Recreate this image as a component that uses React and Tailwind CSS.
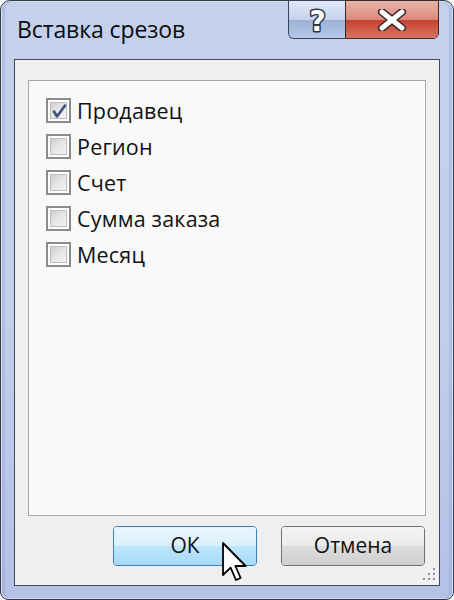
import React from "react";

const items = [
  { label: "Продавец", checked: true },
  { label: "Регион", checked: false },
  { label: "Счет", checked: false },
  { label: "Сумма заказа", checked: false },
  { label: "Месяц", checked: false },
];

function CheckBox({ checked }) {
  return (
    <div className="w-[25px] h-[25px] border-2 border-[#8a8c8e] bg-white p-[2px] shrink-0">
      <div className="relative w-full h-full bg-gradient-to-br from-[#cfcfcf] via-[#e6e6e6] to-[#f4f4f4] border border-[#bdbdbd]">
        {checked && (
          <svg className="absolute inset-0" viewBox="0 0 17 17" width="17" height="17">
            <path d="M3 8.5 L6 13.5 L14 2.5" fill="none" stroke="#3f4f80" strokeWidth="2.6" strokeLinejoin="round" strokeLinecap="round" />
          </svg>
        )}
      </div>
    </div>
  );
}

export default function App() {
  const font = { fontFamily: '"Open Sans", "Noto Sans", sans-serif' };
  return (
    <div className="relative w-[454px] h-[600px] bg-white overflow-hidden" style={font}>
      <div className="w-full h-full flex flex-col border border-[#343a46] rounded-t-[10px] rounded-b-[8px] bg-gradient-to-b from-[#c4d0ec] via-[#c4cfeb] to-[#b4c1e6] px-[13px] shadow-[inset_0_0_0_1px_rgba(255,255,255,0.55),inset_3px_0_0_1px_rgba(140,160,210,0.35),inset_-3px_0_0_1px_rgba(140,160,210,0.35)]">
        {/* title bar */}
        <div className="h-[58px] flex justify-between items-start shrink-0">
          <div className="pt-[13px] pl-[3px] text-[23px] leading-[30px] text-[#0c0c0c] tracking-[-0.1px]">
            Вставка срезов
          </div>
          <div className="flex h-[39px] mr-[1px] mt-[-1px]">
            <div className="w-[57px] h-full border border-[#3a4458] border-r-0 rounded-bl-[6px] overflow-hidden flex flex-col relative">
              <div className="h-1/2 bg-gradient-to-b from-[#e1e9f6] to-[#c4d3ec]"></div>
              <div className="h-1/2 bg-gradient-to-b from-[#9cb1d8] to-[#b6c8e6]"></div>
              <svg className="absolute inset-0" width="57" height="39" viewBox="0 0 57 39">
                <text x="28.5" y="30" textAnchor="middle" fontSize="28" fontWeight="bold" fontFamily="'DejaVu Sans', sans-serif" fill="#ffffff" stroke="#2c3445" strokeWidth="3" paintOrder="stroke" strokeLinejoin="round">?</text>
              </svg>
            </div>
            <div className="w-[94px] h-full border border-[#3a2a2a] rounded-br-[6px] overflow-hidden flex flex-col relative">
              <div className="h-1/2 bg-gradient-to-b from-[#e9b3a8] to-[#d98a7c]"></div>
              <div className="h-1/2 bg-gradient-to-b from-[#c4402f] to-[#d8735e]"></div>
              <div className="absolute inset-0 flex items-center justify-center">
                <svg width="30" height="22" viewBox="0 0 30 22">
                  <path d="M5 3 L25 19 M25 3 L5 19" stroke="#3a2626" strokeWidth="8" strokeLinecap="round" />
                  <path d="M5 3 L25 19 M25 3 L5 19" stroke="#ffffff" strokeWidth="5" strokeLinecap="round" />
                </svg>
              </div>
            </div>
          </div>
        </div>
        {/* client area */}
        <div className="relative h-[527px] border border-[#414857] bg-[#efefef] flex flex-col px-[13px] pt-[20px]">
          <div className="h-[436px] border border-[#a7a7a7] bg-[#f9f9f9] pl-[17px] pt-[17px] flex flex-col gap-[11px]">
            {items.map((it) => (
              <div key={it.label} className="flex items-center gap-[6px] h-[25px]">
                <CheckBox checked={it.checked} />
                <span className="text-[21.5px] leading-[25px] text-[#111] tracking-[0.2px]">{it.label}</span>
              </div>
            ))}
          </div>
          <div className="flex justify-end gap-[24px] pt-[10px] pr-[1px]">
            <div className="relative w-[144px] h-[40px] rounded-[4px] border border-[#3c7fb1] overflow-hidden flex flex-col">
              <div className="h-1/2 bg-gradient-to-b from-[#eaf6fd] to-[#d9f0fc]"></div>
              <div className="h-1/2 bg-gradient-to-b from-[#bee6fd] to-[#a7d9f5]"></div>
              <div className="absolute inset-0 flex items-center justify-center text-[21px] text-[#111]">ОК</div>
            </div>
            <div className="relative w-[144px] h-[40px] rounded-[4px] border border-[#707070] overflow-hidden flex flex-col">
              <div className="h-1/2 bg-gradient-to-b from-[#f4f4f4] to-[#ebebeb]"></div>
              <div className="h-1/2 bg-gradient-to-b from-[#dddddd] to-[#cfcfcf]"></div>
              <div className="absolute inset-0 flex items-center justify-center text-[21px] text-[#111]">Отмена</div>
            </div>
          </div>
          {/* resize grip */}
          <svg className="absolute right-[2px] bottom-[3px]" width="16" height="16" viewBox="0 0 16 16">
            {[[13, 3], [13, 8], [8, 8], [13, 13], [8, 13], [3, 13]].map(([x, y], i) => (
              <g key={i}>
                <rect x={x} y={y} width="2" height="2" fill="#ffffff" />
                <rect x={x - 1} y={y - 1} width="2" height="2" fill="#8a8f9a" />
              </g>
            ))}
          </svg>
        </div>
      </div>
      {/* mouse cursor */}
      <svg className="absolute left-[222px] top-[542px]" width="26" height="40" viewBox="0 0 13 20">
        <path d="M0.5 0.5 L0.5 16.5 L4.3 12.8 L7 19 L9.3 18 L6.7 12 L11.8 12 Z" fill="#ffffff" stroke="#000000" strokeWidth="0.9" strokeLinejoin="round" />
      </svg>
    </div>
  );
}
